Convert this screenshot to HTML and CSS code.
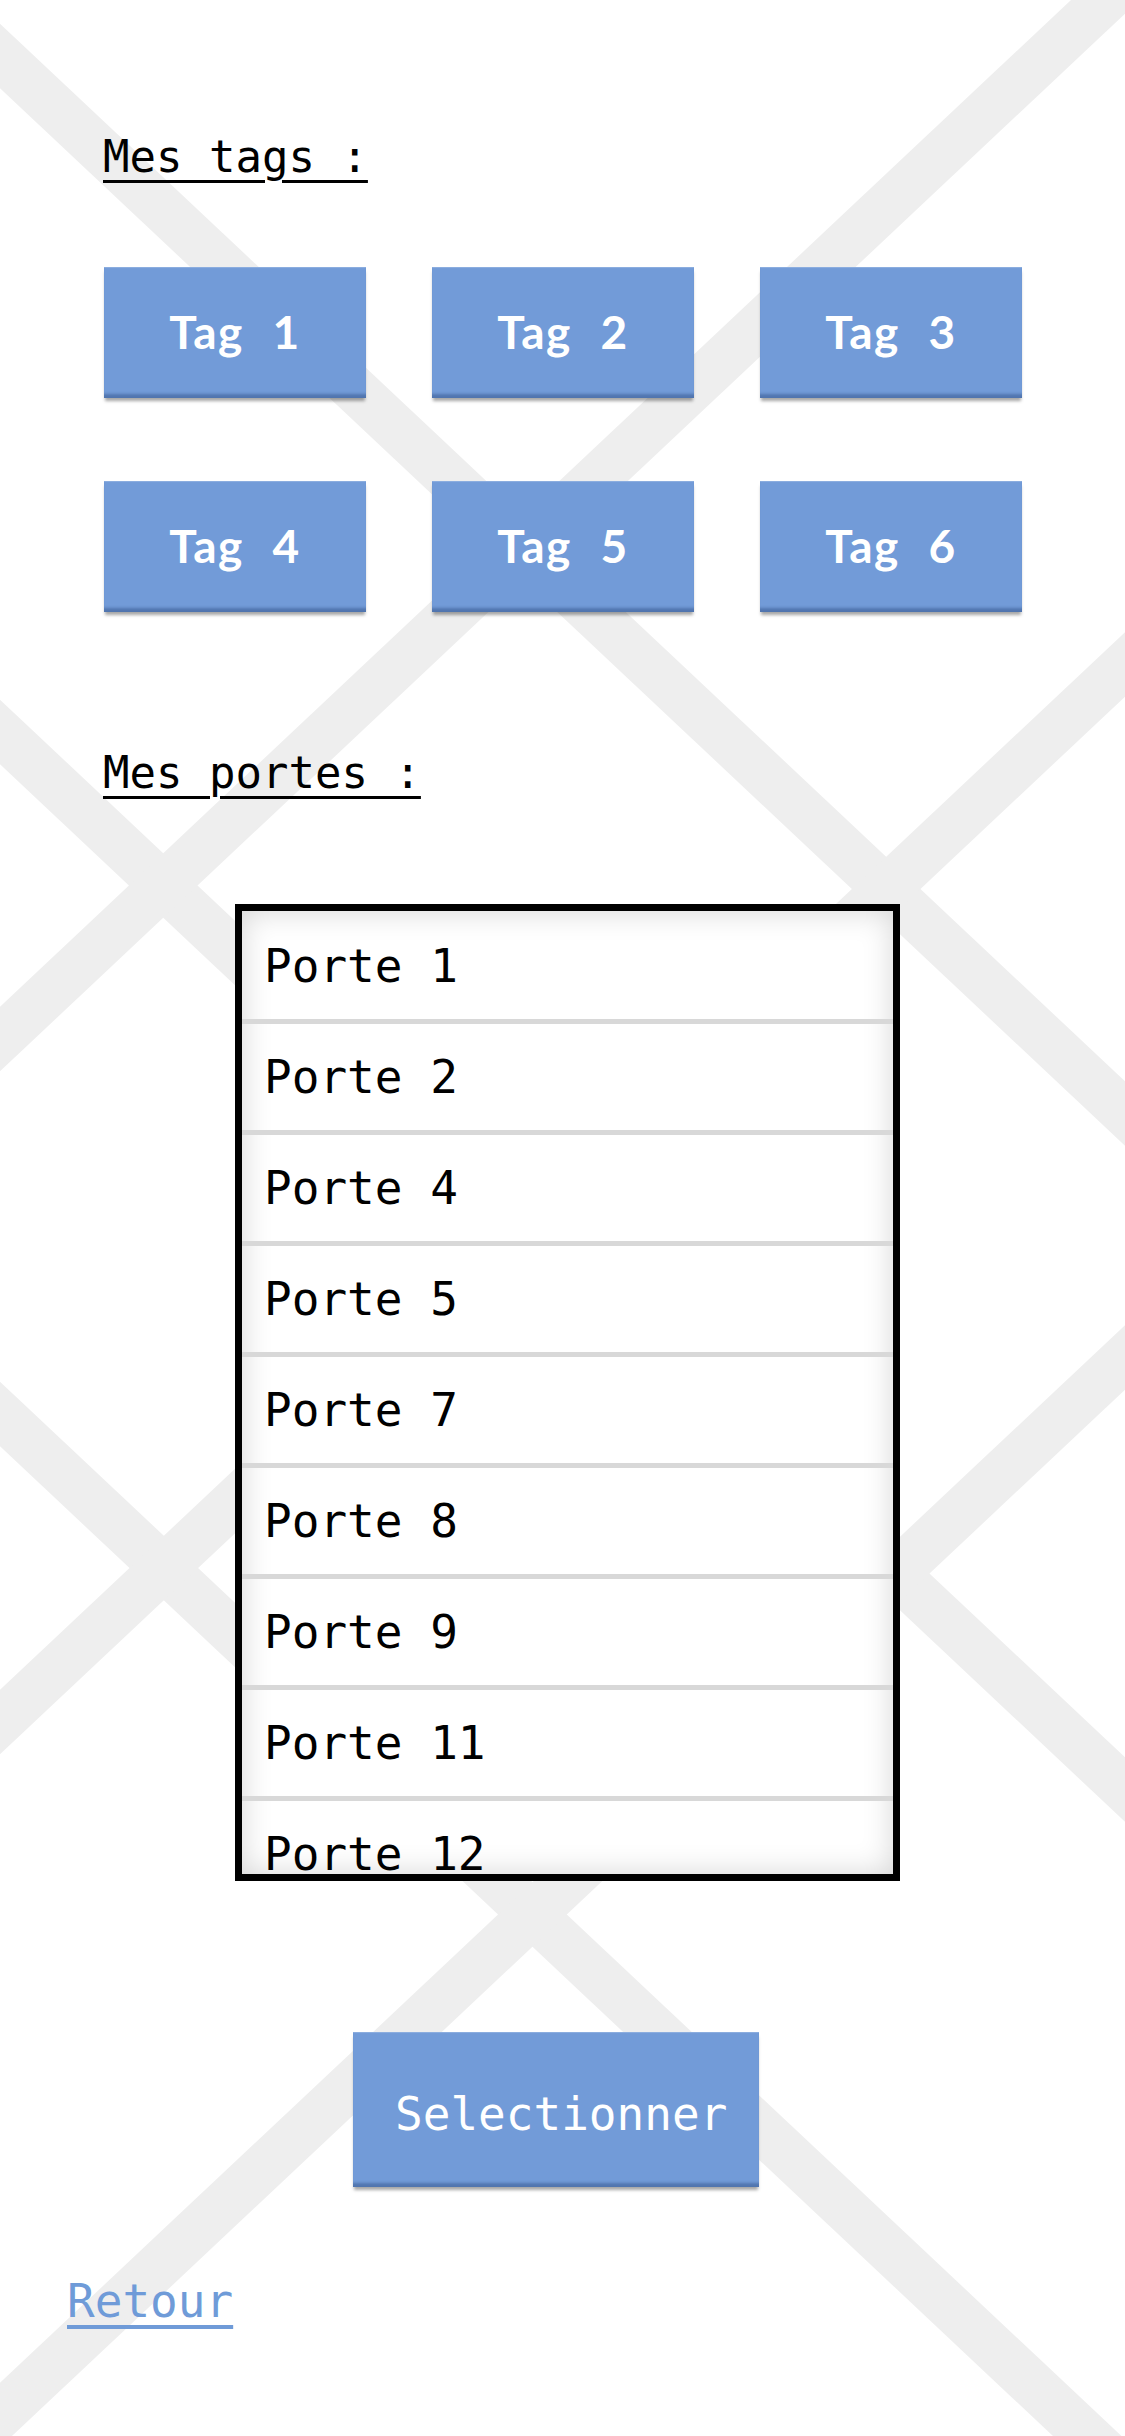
FILE: index.html
```html
<!DOCTYPE html>
<html lang="fr">
<head>
<meta charset="utf-8">
<title>Mes tags</title>
<link rel="stylesheet" href="styles.css">
</head>
<body>
<main class="page">
  <svg class="backdrop" viewBox="0 0 1125 2436" width="1125" height="2436" aria-hidden="true">
    <g stroke="#eeeeee" stroke-width="47" fill="none">
      <line x1="-100" y1="-38" x2="1225" y2="1207.5"/>
      <line x1="-100" y1="638" x2="1225" y2="1883.5"/>
      <line x1="-100" y1="1320" x2="1225" y2="2565.5"/>
      <line x1="-100" y1="1133" x2="1225" y2="-112.5"/>
      <line x1="-100" y1="1816" x2="1225" y2="570.5"/>
      <line x1="-100" y1="2509" x2="1225" y2="1263.5"/>
    </g>
  </svg>

  <h2 class="section-title">Mes tags :</h2>
  <div class="tag-grid">
    <button class="tag">Tag 1</button>
    <button class="tag">Tag 2</button>
    <button class="tag">Tag 3</button>
    <button class="tag">Tag 4</button>
    <button class="tag">Tag 5</button>
    <button class="tag">Tag 6</button>
  </div>

  <h2 class="section-title section-title--doors">Mes portes :</h2>
  <ul class="door-list">
    <li class="door">Porte 1</li>
    <li class="door">Porte 2</li>
    <li class="door">Porte 4</li>
    <li class="door">Porte 5</li>
    <li class="door">Porte 7</li>
    <li class="door">Porte 8</li>
    <li class="door">Porte 9</li>
    <li class="door">Porte 11</li>
    <li class="door">Porte 12</li>
  </ul>

  <button class="select-btn">Selectionner</button>

  <a class="back-link" href="#">Retour</a>
</main>
</body>
</html>
```

FILE: styles.css
```css
html, body {
  margin: 0;
  padding: 0;
  background: #ffffff;
}

.page {
  position: relative;
  isolation: isolate;
  width: 1125px;
  height: 2436px;
  overflow: hidden;
  padding-top: 131px;
  box-sizing: border-box;
  display: flex;
  flex-direction: column;
  align-items: flex-start;
  font-family: "DejaVu Sans Mono", "Liberation Mono", monospace;
  background: #ffffff;
}

.backdrop {
  position: absolute;
  top: 0;
  left: 0;
  z-index: -1;
}

.section-title {
  margin: 0 0 0 103px;
  font-size: 44px;
  line-height: 52px;
  font-weight: normal;
  color: #000;
  text-decoration: underline;
  text-decoration-thickness: 3px;
  text-underline-offset: 8px;
  white-space: pre;
}

.section-title--doors {
  margin-top: 135px;
}

.tag-grid {
  margin: 84px 0 0 104px;
  display: grid;
  grid-template-columns: repeat(3, 262px);
  grid-auto-rows: 131px;
  column-gap: 66px;
  row-gap: 83px;
}

.tag,
.select-btn {
  border: none;
  margin: 0;
  padding: 0;
  background: #729bd8;
  color: #ffffff;
  box-shadow:
    0 4px 3px -1px rgba(0, 0, 0, 0.35),
    inset 0 -6px 3px -2px rgba(40, 70, 125, 0.45),
    inset 0 2px 1px -1px rgba(255, 255, 255, 0.2);
  cursor: pointer;
}

.tag {
  font-family: "Lato", "Open Sans", sans-serif;
  font-weight: 700;
  font-size: 46px;
  letter-spacing: 1.5px;
  word-spacing: 16px;
  display: flex;
  align-items: center;
  justify-content: center;
  padding-bottom: 2px;
}

.door-list {
  list-style: none;
  margin: 105px 0 0 235px;
  padding: 2px 0 0 0;
  width: 665px;
  height: 977px;
  box-sizing: border-box;
  border: 7px solid #000;
  background: #ffffff;
  box-shadow: inset 0 0 30px rgba(0, 0, 0, 0.17);
  overflow: hidden;
}

.door {
  height: 111px;
  box-sizing: border-box;
  padding: 27px 0 0 22px;
  font-size: 46px;
  line-height: 52px;
  color: #000;
  border-bottom: 5px solid #d8d8d8;
  white-space: pre;
}

.select-btn {
  margin: 151px 0 0 353px;
  width: 406px;
  height: 155px;
  font-family: "DejaVu Sans Mono", "Liberation Mono", monospace;
  font-size: 46px;
  line-height: 52px;
  text-align: left;
  padding: 8px 0 0 42px;
  box-sizing: border-box;
}

.back-link {
  margin: 88px 0 0 67px;
  font-size: 46px;
  line-height: 52px;
  color: #6f9bd8;
  text-decoration: underline;
  text-decoration-thickness: 4px;
  text-underline-offset: 8px;
}
```
